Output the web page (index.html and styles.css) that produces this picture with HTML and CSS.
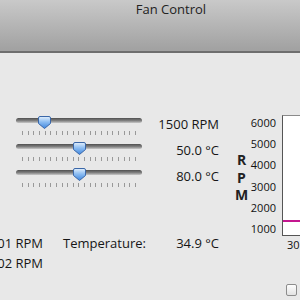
FILE: index.html
```html
<!DOCTYPE html>
<html lang="en">
<head>
    <meta charset="UTF-8">
    <title>Fan Control</title>
    <link rel="stylesheet" href="styles.css">
</head>
<body>
    <div class="window">
        <div class="titlebar">Fan Control</div>

        <div class="main">
            <div class="left_panel">
                <div class="controls">
                    <div class="slider">
                        <div class="track"></div>
                        <div class="ticks"></div>
                        <svg class="thumb" style="left: 38px" width="13" height="13" viewBox="0 0 13 13">
                            <defs>
                                <linearGradient id="thumb_fill" x1="0" y1="0" x2="0" y2="1">
                                    <stop offset="0" stop-color="#e4f0fc"/>
                                    <stop offset="0.45" stop-color="#8dbdf2"/>
                                    <stop offset="1" stop-color="#3f86dd"/>
                                </linearGradient>
                            </defs>
                            <path d="M2 0.5h9a1.5 1.5 0 0 1 1.5 1.5v5.5l-6 5l-6 -5v-5.5a1.5 1.5 0 0 1 1.5 -1.5z" fill="url(#thumb_fill)" stroke="#3b67a8"/>
                        </svg>
                    </div>
                    <div class="value">1500 RPM</div>

                    <div class="slider">
                        <div class="track"></div>
                        <div class="ticks"></div>
                        <svg class="thumb" style="left: 72.5px" width="13" height="13" viewBox="0 0 13 13">
                            <path d="M2 0.5h9a1.5 1.5 0 0 1 1.5 1.5v5.5l-6 5l-6 -5v-5.5a1.5 1.5 0 0 1 1.5 -1.5z" fill="url(#thumb_fill)" stroke="#3b67a8"/>
                        </svg>
                    </div>
                    <div class="value">50.0 °C</div>

                    <div class="slider">
                        <div class="track"></div>
                        <div class="ticks"></div>
                        <svg class="thumb" style="left: 72.5px" width="13" height="13" viewBox="0 0 13 13">
                            <path d="M2 0.5h9a1.5 1.5 0 0 1 1.5 1.5v5.5l-6 5l-6 -5v-5.5a1.5 1.5 0 0 1 1.5 -1.5z" fill="url(#thumb_fill)" stroke="#3b67a8"/>
                        </svg>
                    </div>
                    <div class="value">80.0 °C</div>
                </div>

                <div class="readouts">
                    <div class="fan_speed"><span>1501 RPM</span></div>
                    <div class="label">Temperature:</div>
                    <div class="reading">34.9 °C</div>
                    <div class="fan_speed"><span>1502 RPM</span></div>
                    <div class="label"></div>
                    <div class="reading"></div>
                </div>
            </div>

            <div class="chart_panel">
                <div class="axis_title">R<br>P<br>M</div>
                <div class="y_labels">
                    <div>6000</div>
                    <div>5000</div>
                    <div>4000</div>
                    <div>3000</div>
                    <div>2000</div>
                    <div>1000</div>
                </div>
                <div class="plot_column">
                    <div class="plot">
                        <div class="series" style="margin-top: 104px"></div>
                    </div>
                    <div class="x_label">30</div>
                    <span class="checkbox"></span>
                </div>
            </div>
        </div>
    </div>
</body>
</html>
```

FILE: styles.css
```css
* {
    margin: 0;
    padding: 0;
    box-sizing: border-box;
}

body {
    background-color: #e8e8e8;
    font-family: "Open Sans", "DejaVu Sans", sans-serif;
    font-size: 13px;
    color: #161616;
    width: 300px;
    height: 300px;
    overflow: hidden;
}

.titlebar {
    height: 53px;
    padding-left: 42px;
    line-height: 19px;
    text-align: center;
    color: #222;
    background: linear-gradient(#c9c9c9, #a2a2a2 96%);
    border-bottom: 2px solid #6e6e6e;
}

.main {
    display: flex;
    padding-top: 58px;
}

.left_panel {
    width: 226px;
    flex-shrink: 0;
}

.controls {
    display: grid;
    grid-template-columns: 142px 1fr;
    grid-auto-rows: 26px;
}

.slider {
    position: relative;
    padding-left: 16px;
}

.track {
    margin-top: 7px;
    height: 5px;
    border-radius: 3px;
    background: linear-gradient(#4f4f4f, #828282 55%, #c9c9c9);
}

.ticks {
    margin: 8px 0 0 6px;
    width: 115px;
    height: 4px;
    background: repeating-linear-gradient(to right, #999 0 1px, transparent 1px 5.65px);
}

.thumb {
    position: absolute;
    top: 5px;
}

.value {
    text-align: right;
    padding-right: 7px;
    line-height: 26px;
    white-space: nowrap;
}

.readouts {
    margin-top: 44px;
    display: grid;
    grid-template-columns: 43px 85px 51px;
    column-gap: 20px;
    grid-auto-rows: 20px;
    line-height: 20px;
    white-space: nowrap;
}

.fan_speed {
    display: flex;
    justify-content: flex-end;
}

.reading {
    text-align: right;
}

.chart_panel {
    display: flex;
    align-items: flex-start;
}

.axis_title {
    width: 24px;
    padding-left: 7px;
    margin-top: 40px;
    text-align: center;
    font-weight: bold;
    font-size: 14px;
    line-height: 17.5px;
    color: #222;
}

.y_labels {
    width: 26px;
    margin-top: 1px;
    text-align: right;
    font-size: 11px;
    line-height: 21.2px;
    color: #111;
}

.plot_column {
    margin-left: 6px;
    margin-top: 4px;
}

.plot {
    width: 120px;
    height: 121px;
    background-color: white;
    border-left: 1px solid #555;
    border-bottom: 1px solid #555;
    border-top: 1px solid #8a8a8a;
}

.series {
    height: 2px;
    background-color: #c4168f;
}

.x_label {
    margin: 2px 0 0 5px;
    font-size: 11px;
    line-height: 14px;
    color: #111;
}

.checkbox {
    display: block;
    margin: 32px 0 0 4px;
    width: 11px;
    height: 12px;
    border: 1px solid #8c8c8c;
    border-radius: 2px;
    background: linear-gradient(#fdfdfd, #e2e2e2);
}
```
